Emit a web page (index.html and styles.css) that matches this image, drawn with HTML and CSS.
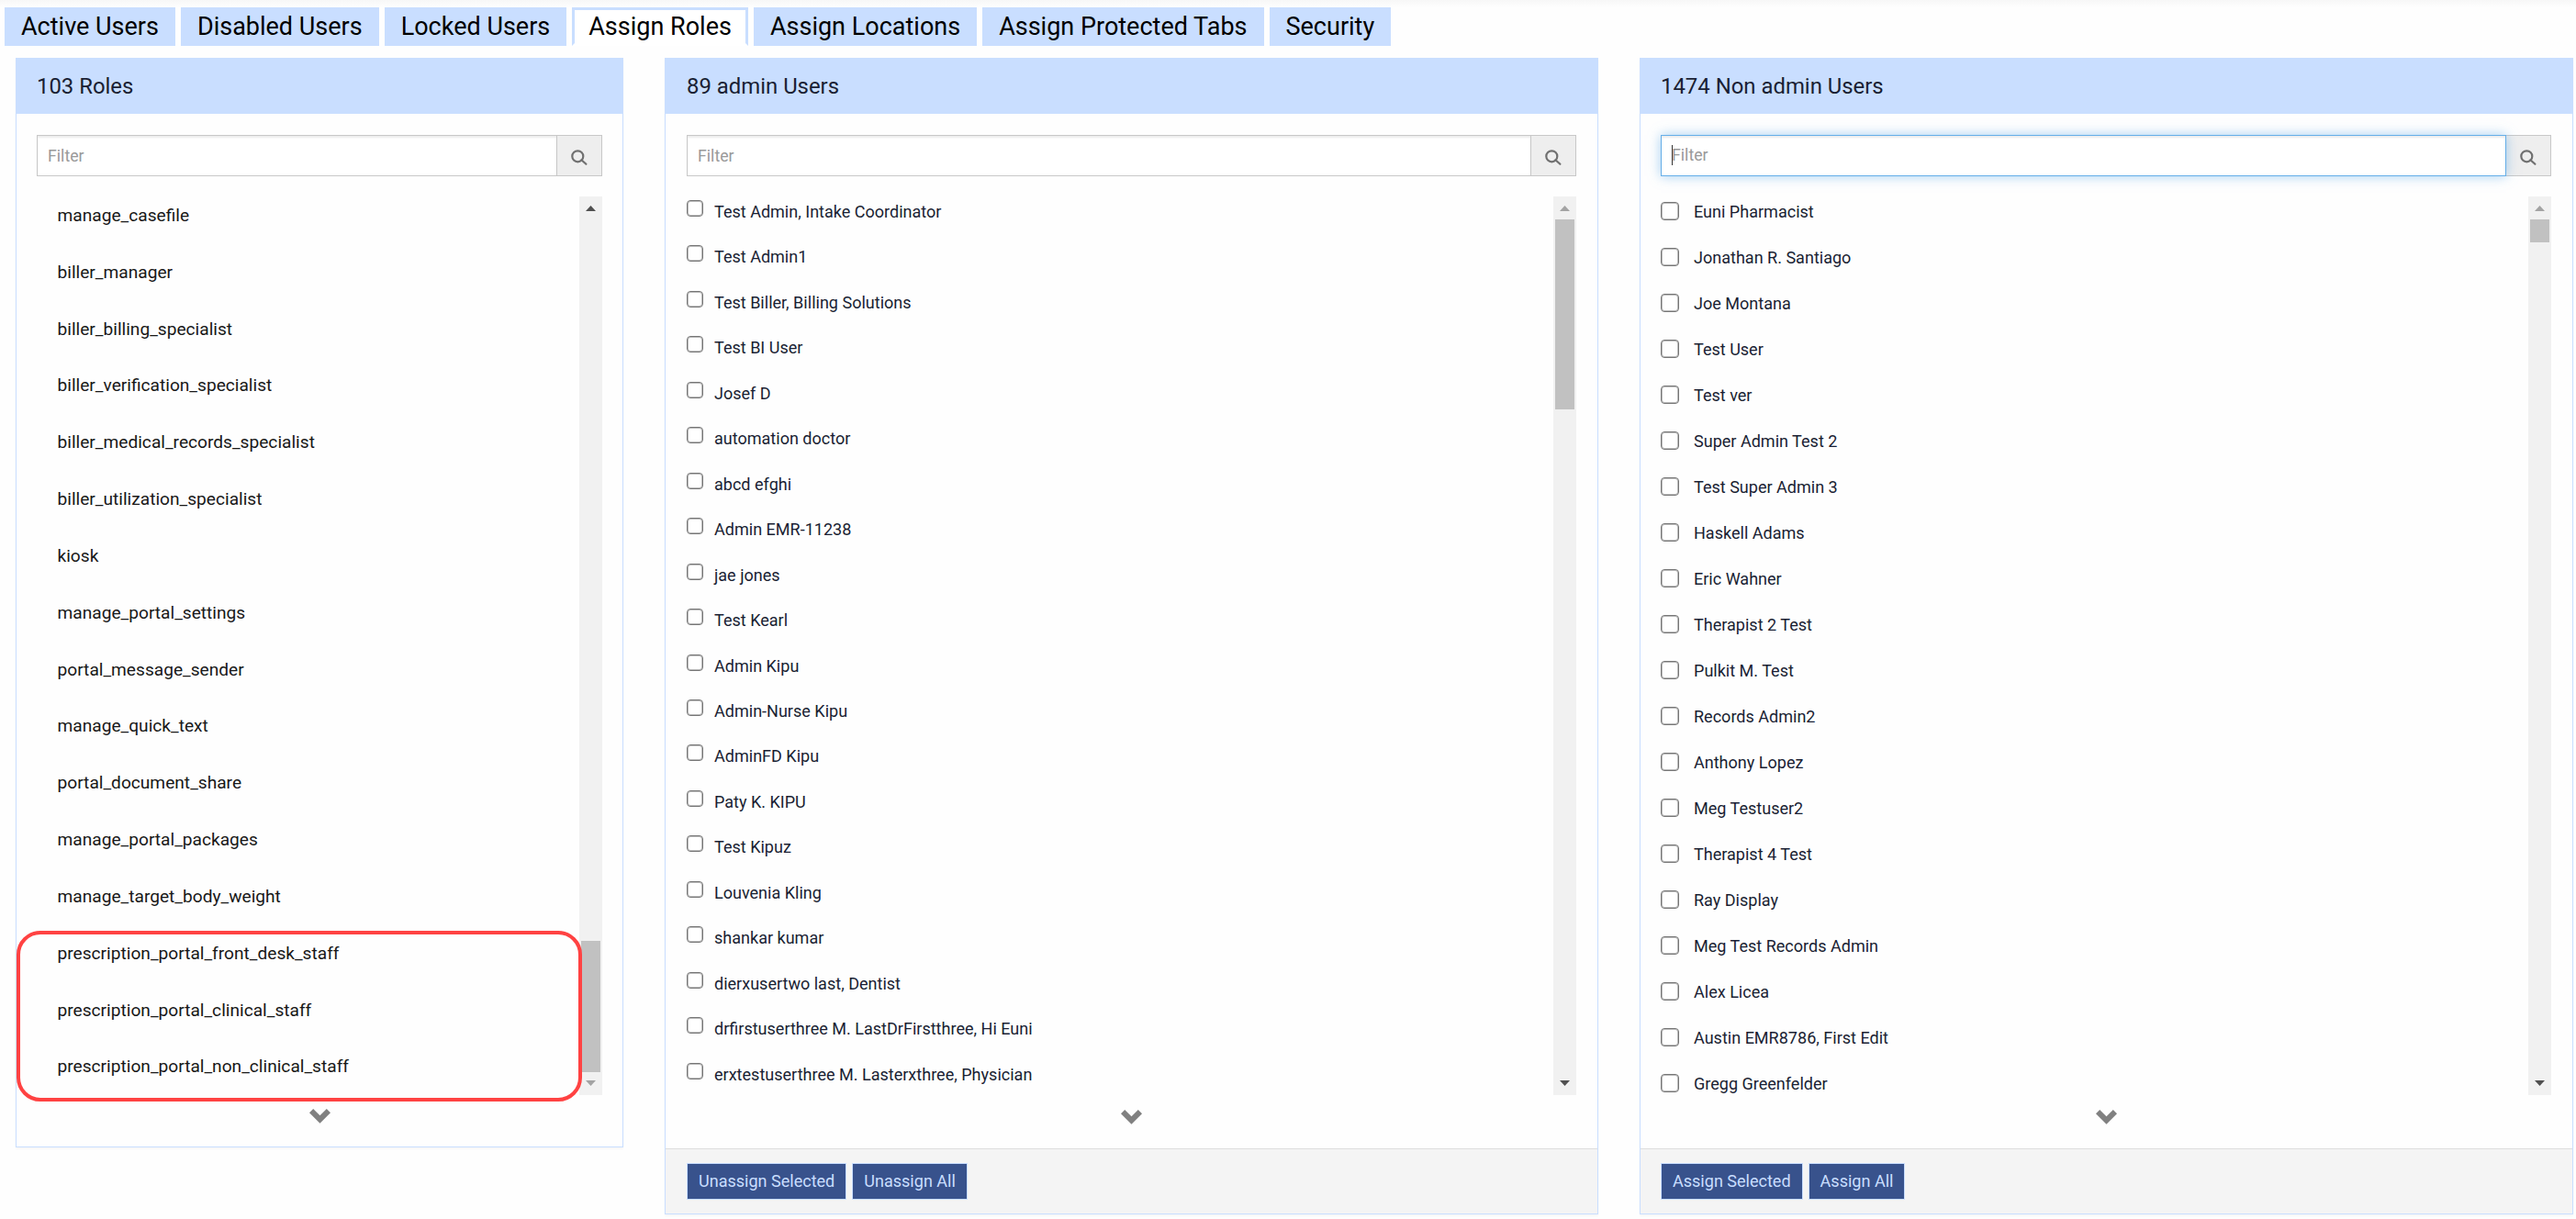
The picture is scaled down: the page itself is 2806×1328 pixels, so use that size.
FILE: index.html
```html
<!DOCTYPE html>
<html lang="en">
<head>
    <meta charset="UTF-8">
    <meta name="viewport" content="width=device-width, initial-scale=1.0">
    <title>Assign Roles</title>
    <link rel="stylesheet" href="styles.css">
</head>
<body>
    <nav class="tabs">
        <a class="tab">Active Users</a>
        <a class="tab">Disabled Users</a>
        <a class="tab">Locked Users</a>
        <a class="tab active">Assign Roles</a>
        <a class="tab">Assign Locations</a>
        <a class="tab">Assign Protected Tabs</a>
        <a class="tab">Security</a>
    </nav>

    <main class="panels">
        <section class="panel roles">
            <h2 class="panel-title">103 Roles</h2>
            <div class="panel-body">
                <div class="filter">
                    <input type="text" class="filter-input" placeholder="Filter">
                    <span class="addon"><svg class="search" viewBox="0 0 18 18"><circle cx="7.3" cy="7.3" r="6"/><path d="M11.4 11.2L16.4 15.8"/></svg></span>
                </div>
                <div class="list-box">
                    <ul class="list role-list">
                        <li>manage_casefile</li>
                        <li>biller_manager</li>
                        <li>biller_billing_specialist</li>
                        <li>biller_verification_specialist</li>
                        <li>biller_medical_records_specialist</li>
                        <li>biller_utilization_specialist</li>
                        <li>kiosk</li>
                        <li>manage_portal_settings</li>
                        <li>portal_message_sender</li>
                        <li>manage_quick_text</li>
                        <li>portal_document_share</li>
                        <li>manage_portal_packages</li>
                        <li>manage_target_body_weight</li>
                        <li>prescription_portal_front_desk_staff</li>
                        <li>prescription_portal_clinical_staff</li>
                        <li>prescription_portal_non_clinical_staff</li>
                    </ul>
                    <div class="scrollbar at-bottom">
                        <span class="arrow up"></span>
                        <span class="thumb"></span>
                        <span class="arrow down"></span>
                    </div>
                </div>
                <svg class="more" viewBox="0 0 23 16"><path d="M0 4.2L4.2 0L11.5 7.2L18.8 0L23 4.2L11.5 15.8Z"/></svg>
            </div>
            <div class="highlight"></div>
        </section>

        <section class="panel admins">
            <h2 class="panel-title">89 admin Users</h2>
            <div class="panel-body">
                <div class="filter">
                    <input type="text" class="filter-input" placeholder="Filter">
                    <span class="addon"><svg class="search" viewBox="0 0 18 18"><circle cx="7.3" cy="7.3" r="6"/><path d="M11.4 11.2L16.4 15.8"/></svg></span>
                </div>
                <div class="list-box">
                    <ul class="list user-list">
                        <li><i class="check"></i>Test Admin, Intake Coordinator</li>
                        <li><i class="check"></i>Test Admin1</li>
                        <li><i class="check"></i>Test Biller, Billing Solutions</li>
                        <li><i class="check"></i>Test BI User</li>
                        <li><i class="check"></i>Josef D</li>
                        <li><i class="check"></i>automation doctor</li>
                        <li><i class="check"></i>abcd efghi</li>
                        <li><i class="check"></i>Admin EMR-11238</li>
                        <li><i class="check"></i>jae jones</li>
                        <li><i class="check"></i>Test Kearl</li>
                        <li><i class="check"></i>Admin Kipu</li>
                        <li><i class="check"></i>Admin-Nurse Kipu</li>
                        <li><i class="check"></i>AdminFD Kipu</li>
                        <li><i class="check"></i>Paty K. KIPU</li>
                        <li><i class="check"></i>Test Kipuz</li>
                        <li><i class="check"></i>Louvenia Kling</li>
                        <li><i class="check"></i>shankar kumar</li>
                        <li><i class="check"></i>dierxusertwo last, Dentist</li>
                        <li><i class="check"></i>drfirstuserthree M. LastDrFirstthree, Hi Euni</li>
                        <li><i class="check"></i>erxtestuserthree M. Lasterxthree, Physician</li>
                    </ul>
                    <div class="scrollbar at-top">
                        <span class="arrow up"></span>
                        <span class="thumb"></span>
                        <span class="arrow down"></span>
                    </div>
                </div>
                <svg class="more" viewBox="0 0 23 16"><path d="M0 4.2L4.2 0L11.5 7.2L18.8 0L23 4.2L11.5 15.8Z"/></svg>
            </div>
            <div class="panel-footer">
                <button class="btn">Unassign Selected</button>
                <button class="btn">Unassign All</button>
            </div>
        </section>

        <section class="panel non-admins">
            <h2 class="panel-title">1474 Non admin Users</h2>
            <div class="panel-body">
                <div class="filter">
                    <div class="filter-input focused"><span class="caret"></span>Filter</div>
                    <span class="addon"><svg class="search" viewBox="0 0 18 18"><circle cx="7.3" cy="7.3" r="6"/><path d="M11.4 11.2L16.4 15.8"/></svg></span>
                </div>
                <div class="list-box">
                    <ul class="list user-list">
                        <li><i class="check"></i>Euni Pharmacist</li>
                        <li><i class="check"></i>Jonathan R. Santiago</li>
                        <li><i class="check"></i>Joe Montana</li>
                        <li><i class="check"></i>Test User</li>
                        <li><i class="check"></i>Test ver</li>
                        <li><i class="check"></i>Super Admin Test 2</li>
                        <li><i class="check"></i>Test Super Admin 3</li>
                        <li><i class="check"></i>Haskell Adams</li>
                        <li><i class="check"></i>Eric Wahner</li>
                        <li><i class="check"></i>Therapist 2 Test</li>
                        <li><i class="check"></i>Pulkit M. Test</li>
                        <li><i class="check"></i>Records Admin2</li>
                        <li><i class="check"></i>Anthony Lopez</li>
                        <li><i class="check"></i>Meg Testuser2</li>
                        <li><i class="check"></i>Therapist 4 Test</li>
                        <li><i class="check"></i>Ray Display</li>
                        <li><i class="check"></i>Meg Test Records Admin</li>
                        <li><i class="check"></i>Alex Licea</li>
                        <li><i class="check"></i>Austin EMR8786, First Edit</li>
                        <li><i class="check"></i>Gregg Greenfelder</li>
                    </ul>
                    <div class="scrollbar at-top">
                        <span class="arrow up"></span>
                        <span class="thumb"></span>
                        <span class="arrow down"></span>
                    </div>
                </div>
                <svg class="more" viewBox="0 0 23 16"><path d="M0 4.2L4.2 0L11.5 7.2L18.8 0L23 4.2L11.5 15.8Z"/></svg>
            </div>
            <div class="panel-footer">
                <button class="btn">Assign Selected</button>
                <button class="btn">Assign All</button>
            </div>
        </section>
    </main>
</body>
</html>
```
FILE: styles.css
```css
* {
    box-sizing: border-box;
}

body {
    margin: 0;
    height: 1328px;
    overflow: hidden;
    font-family: Roboto, "Liberation Sans", sans-serif;
    font-size: 18.05px;
    color: #1a1f33;
    background: #fefefe linear-gradient(#f7f7f7, #fefefe 8px) no-repeat;
}

.tabs {
    display: flex;
    gap: 6px;
    padding: 8px 0 0 5px;
}

.tab {
    height: 42px;
    padding: 0 18px;
    line-height: 42px;
    font-size: 27px;
    color: #000;
    background: #c9deff;
}

.tab.active {
    padding: 0 15px;
    line-height: 36px;
    background: #fff;
    border: 3px solid #c9deff;
    border-bottom-color: #fff;
}

.panels {
    display: flex;
    align-items: flex-start;
    gap: 45px;
    padding: 13px 3px 0 17px;
}

.panel {
    position: relative;
    flex: none;
    width: 1017px;
    background: #fefefe;
    border: 1px solid #c9deff;
    box-shadow: 0 2px 2px rgba(0, 0, 0, 0.03);
}

.panel.roles {
    width: 662px;
}

.panel-title {
    margin: 0;
    height: 60px;
    padding-left: 22px;
    line-height: 60px;
    font-size: 23.9px;
    font-weight: 400;
    background: #c9deff;
}

.admins .panel-title {
    padding-left: 23px;
}

.panel-body {
    display: flex;
    flex-direction: column;
    height: 1127px;
    padding: 23px 23px 0 22px;
}

.roles .panel-body {
    height: 1125px;
    padding-right: 22px;
}

.admins .panel-body {
    padding-left: 23px;
}

.filter {
    display: flex;
    height: 45px;
}

.filter-input {
    flex: 1;
    padding: 0 11px;
    font: 17.7px/42px Roboto, sans-serif;
    color: #999;
    background: #fff;
    border: 1px solid #c8c8c8;
    box-shadow: inset 0 2px 2px rgba(0, 0, 0, 0.075);
    outline: none;
}

.filter-input::placeholder {
    color: #999;
}

.filter-input.focused {
    position: relative;
    border-color: #66afe9;
    box-shadow: inset 0 2px 2px rgba(0, 0, 0, 0.075), 0 0 12px rgba(102, 175, 233, 0.6);
}

.caret {
    position: absolute;
    left: 11px;
    top: 10px;
    width: 1px;
    height: 22px;
    background: #333;
}

.addon {
    width: 49px;
    padding: 15px 0 0 15px;
    line-height: 0;
    background: #eee;
    border: 1px solid #c8c8c8;
    border-left: 0;
}

.search {
    width: 18px;
    height: 18px;
    fill: none;
    stroke: #707070;
    stroke-width: 2.2;
    stroke-linecap: round;
}

.list-box {
    display: flex;
    height: 979px;
    margin-top: 22px;
}

.list {
    flex: 1;
    margin: 0;
    padding: 0;
    list-style: none;
    overflow: hidden;
}

.role-list {
    padding-left: 22.5px;
    font-size: 19.15px;
    color: #181818;
}

.role-list li {
    height: 61.83px;
    line-height: 41px;
}

.user-list li {
    display: flex;
    height: 50px;
    line-height: 34px;
}

.admins .user-list li {
    height: 49.46px;
}

.check {
    flex: none;
    width: 20px;
    height: 20px;
    margin: 6px 16px 0 0;
    background: #fff;
    border: 1px solid #767676;
    border-radius: 4px;
    box-shadow: inset 0 0 0 1px rgba(118, 118, 118, 0.5);
}

.admins .check {
    width: 18px;
    height: 18px;
    margin: 4px 12px 0 0;
}

.scrollbar {
    display: flex;
    flex-direction: column;
    width: 25px;
    background: #f1f1f1;
}

.arrow {
    width: 11px;
    height: 6px;
    margin: 10px 7px 9px;
    background: #505050;
}

.arrow.up {
    clip-path: polygon(50% 0, 100% 100%, 0 100%);
}

.arrow.down {
    margin: 9px 7px 10px;
    clip-path: polygon(0 0, 100% 0, 50% 100%);
}

.at-top .arrow.up,
.at-bottom .arrow.down {
    background: #a3a3a3;
}

.thumb {
    width: 21px;
    height: 25px;
    margin: 0 2px auto;
    background: #c1c1c1;
}

.admins .thumb {
    height: 207px;
}

.at-bottom .thumb {
    height: 143px;
    margin: auto 2px 0;
}

.more {
    align-self: center;
    width: 23px;
    height: 16px;
    margin-top: 16px;
    fill: #808080;
}

.roles .more {
    margin-top: 15px;
}

.panel-footer {
    display: flex;
    gap: 6px;
    height: 71px;
    padding: 15px 22px 0;
    background: #f4f4f4;
    border-top: 1px solid #ddd;
}

.admins .panel-footer {
    padding-left: 23px;
}

.btn {
    height: 40px;
    padding: 0 12px 2px;
    font: 18.05px Roboto, sans-serif;
    color: #c9deff;
    background: #38528c;
    border: 1px solid #c9deff;
}

/* marks the newly added prescription roles */
.highlight {
    position: absolute;
    left: 0;
    top: 950px;
    width: 616px;
    height: 186px;
    border: 4px solid #ff4242;
    border-radius: 26px;
}
```
